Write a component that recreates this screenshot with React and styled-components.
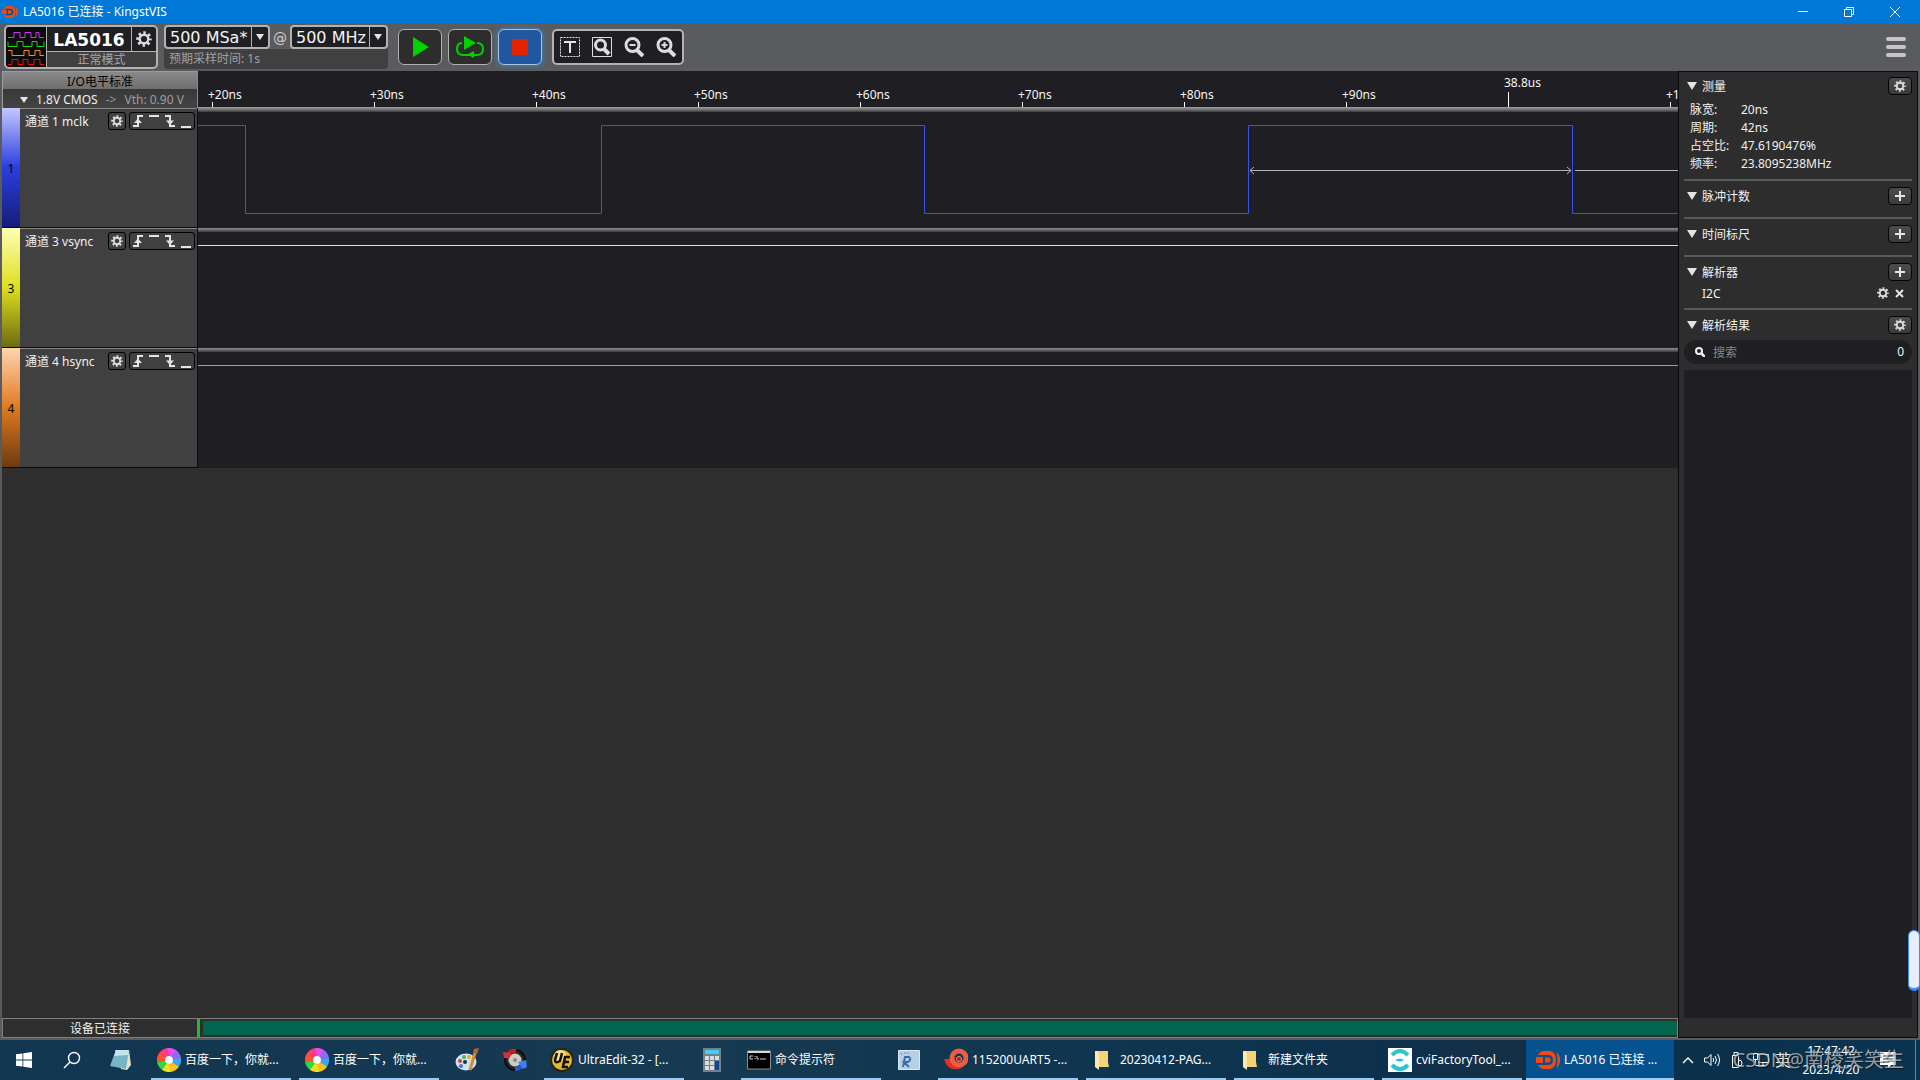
import React from "react";
import styled, { createGlobalStyle, css } from "styled-components";

const Global = createGlobalStyle`
  *, *::before, *::after { box-sizing: border-box; }
  body { margin: 0; background: #595b5f; }
  body, button, input, select {
    font-family: "Noto Sans", "Noto Sans CJK SC", sans-serif;
    font-size: 12px;
    line-height: 18px;
    color: #f0f0f0;
  }
  button { background: none; border: 0; padding: 0; margin: 0; }
  svg { display: block; flex: none; }
`;

const Screen = styled.div`
  min-height: 100vh;
  display: flex;
  flex-direction: column;
  background: #595b5f;
  position: relative;
  overflow: hidden;
`;

/* ---------- title bar ---------- */
const TitleBar = styled.header`
  height: 23px;
  background: #0078d7;
  display: flex;
  align-items: center;
  gap: 5px;
  padding: 0 2px;
`;
const WindowTitle = styled.div`
  flex: 1;
  color: #fff;
`;
const WindowButtons = styled.div`
  display: flex;
`;
const WindowButton = styled.button`
  width: 46px;
  height: 23px;
  display: grid;
  place-items: center;
`;

/* ---------- tool bar ---------- */
const Toolbar = styled.div`
  height: 48px;
  padding: 2px 14px 2px 4px;
  display: flex;
  align-items: center;
`;
const DeviceBox = styled.div`
  width: 154px;
  height: 44px;
  border: 2px solid #b2b2b2;
  border-radius: 5px;
  background: #b2b2b2;
  display: grid;
  grid-template-columns: 40px 1fr 24px;
  grid-template-rows: 1fr 15px;
  gap: 1px;
  overflow: hidden;
`;
const DeviceLogo = styled.div`
  grid-row: span 2;
  background: #0c0c0c;
  display: grid;
  place-items: center;
`;
const DeviceName = styled.div`
  background: #1f1e23;
  color: #fff;
  font: bold 17px/26px "DejaVu Sans", sans-serif;
  height: 24px;
  text-align: center;
`;
const DeviceGear = styled.button`
  background: #1f1e23;
  display: grid;
  place-items: center;
`;
const DeviceMode = styled.div`
  grid-column: span 2;
  background: #404040;
  color: #a6a6a6;
  line-height: 15px;
  text-align: center;
`;
const SampleBox = styled.div`
  margin-left: 6px;
  width: 224px;
  height: 44px;
  border-radius: 4px;
  background: #404040;
  display: flex;
  flex-direction: column;
`;
const SampleRow = styled.div`
  display: flex;
  justify-content: space-between;
  border-radius: 4px;
  background: #595b5f;
`;
const At = styled.span`
  font: 14px/26px "DejaVu Sans", sans-serif;
  height: 24px;
  color: #d0d0d0;
`;
const SampleNote = styled.div`
  padding: 1px 0 0 5px;
  color: #a0a0a0;
`;
const SelectFrame = styled.div`
  width: ${(p) => p.$w}px;
  height: 24px;
  border: 2px solid #b2b2b2;
  border-radius: 4px;
  background: #1f1e23;
  display: flex;
  align-items: stretch;
`;
const Select = styled.select`
  appearance: none;
  flex: 1;
  min-width: 0;
  border: 0;
  border-right: 1px solid #b2b2b2;
  padding: 1px 0 0 4px;
  background: transparent;
  color: #f4f4f4;
  font: 16px/20px "DejaVu Sans", sans-serif;
`;
const SelectArrow = styled.span`
  width: 16px;
  display: grid;
  place-items: center;
`;
const RunButtons = styled.div`
  display: flex;
  gap: 6px;
  margin-left: 10px;
`;
const RunButton = styled.button`
  width: 44px;
  height: 36px;
  border: 1px solid #b2b2b2;
  border-radius: 6px;
  background: #2d2d2d;
  display: grid;
  place-items: center;
  ${(p) =>
    p.$active &&
    css`
      background: #2158a0;
      border-color: #a9c4dc;
      box-shadow: 0 0 5px 1px #3d7fb0;
    `}
`;
const ZoomGroup = styled.div`
  margin-left: 10px;
  height: 36px;
  padding: 0 6px;
  border: 2px solid #b2b2b2;
  border-radius: 5px;
  background: #1f1e23;
  display: flex;
  align-items: center;
  gap: 12px;
`;
const MenuButton = styled.button`
  margin-left: auto;
`;

/* ---------- work area ---------- */
const Work = styled.div`
  flex: 1;
  display: grid;
  grid-template-columns: minmax(0, 1fr) 240px;
  padding: 0 2px 2px;
`;
const Capture = styled.main`
  display: flex;
  flex-direction: column;
  min-width: 0;
  background: #2e2e2e;
`;
const Line = styled.div`
  display: grid;
  grid-template-columns: 196px minmax(0, 1fr);
`;
const Standard = styled.div`
  height: 37px;
  border: 1px solid #9c9c9c;
  border-right-color: #8a8a8a;
  background: #404040;
  display: flex;
  flex-direction: column;
`;
const StandardTitle = styled.div`
  height: 17px;
  line-height: 20px;
  background: linear-gradient(#8a8a8a, #6e6e6e);
  color: #000;
  text-align: center;
`;
const StandardButton = styled.button`
  flex: 1;
  display: flex;
  align-items: center;
  padding: 2px 0 0 17px;
  background: linear-gradient(#383838, #444);
  gap: 8px;
  white-space: nowrap;
`;
const Dim = styled.span`
  color: #9c9c9c;
`;
const Ruler = styled.div`
  height: 37px;
  padding-left: 10px;
  background: #1f1e23;
  border-bottom: 1px solid #9a9a9a;
  display: flex;
  align-items: flex-end;
  overflow: hidden;
`;
const Tick = styled.div`
  flex: none;
  width: 162px;
  line-height: ${(p) => (p.$major ? 18 : 14)}px;
  color: #f4f4f4;
  &::after {
    content: "";
    display: block;
    width: 1px;
    height: ${(p) => (p.$major ? 15 : 5)}px;
    margin-left: 4px;
    background: #fff;
  }
`;
const Channel = styled.section`
  height: 120px;
  display: flex;
  border-right: 1px solid #0c0c0c;
  border-bottom: 1px solid #0c0c0c;
  background: #404040;
`;
const ChannelStrip = styled.div`
  width: 18px;
  padding-top: 1px;
  background: linear-gradient(${(p) => p.$stops});
  color: #000;
  text-align: center;
  line-height: 120px;
`;
const ChannelHead = styled.div`
  flex: 1;
  border-top: 1px solid #8a8a8a;
  padding: 3px 2px 0 5px;
  display: flex;
  align-items: flex-start;
  gap: 3px;
`;
const ChannelName = styled.div`
  flex: 1;
  padding-top: 1px;
  white-space: nowrap;
`;
const InsetButton = styled.button`
  width: 18px;
  height: 18px;
  border: 1px solid #000;
  border-radius: 3px;
  display: grid;
  place-items: center;
`;
const Triggers = styled.div`
  width: 66px;
  height: 18px;
  border: 1px solid #000;
  border-radius: 3px;
  padding: 0 3px;
  display: flex;
  align-items: center;
  gap: 6px;
`;
const Lane = styled.div`
  height: 120px;
  background: linear-gradient(#8c8c8c, #6a6a6a 2px, #3a3a3a 4px, #1f1e23 4px);
  overflow: hidden;
`;
const StatusLine = styled.footer`
  margin-top: auto;
  height: 20px;
  display: grid;
  grid-template-columns: 196px minmax(0, 1fr);
`;
const Status = styled.div`
  border: 1px solid #7e7e7e;
  text-align: center;
  line-height: 20px;
  height: 20px;
`;
const Progress = styled.div`
  border: 1px solid #7e7e7e;
  border-left: 0;
  padding: 2px 0;
  display: flex;
  gap: 3px;
  &::before {
    content: "";
    width: 2px;
    margin: -2px 0;
    background: #1fb83a;
  }
  &::after {
    content: "";
    flex: 1;
    background: #00664f;
  }
`;

/* ---------- side panel ---------- */
const Side = styled.aside`
  border: 1px solid #0a0a0a;
  background: #2d2d2d;
  padding: 0 5px 19px;
  display: flex;
  flex-direction: column;
`;
const Section = styled.section`
  padding: ${(p) => p.$pad};
  & + & {
    border-top: 2px solid #56595d;
  }
`;
const SectionHead = styled.div`
  height: 18px;
  padding-left: 3px;
  display: flex;
  align-items: center;
  gap: 5px;
`;
const SectionTitle = styled.div`
  flex: 1;
  padding-top: 2px;
`;
const RaisedButton = styled.button`
  width: 24px;
  height: 18px;
  border: 1px solid #050505;
  border-radius: 4px;
  background: linear-gradient(#4c4c4c, #3a3a3a);
  display: grid;
  place-items: center;
`;
const Readings = styled.dl`
  margin: 6px 0 0 6px;
  display: grid;
  grid-template-columns: 51px 1fr;
  dd { margin: 0; }
`;
const Analyzer = styled.div`
  height: 24px;
  padding: 0 8px 0 18px;
  display: flex;
  align-items: center;
  gap: 6px;
`;
const AnalyzerName = styled.div`
  flex: 1;
  padding-top: 1px;
`;
const Search = styled.label`
  margin-top: 6px;
  height: 24px;
  border-radius: 12px;
  background: #1f1e23;
  padding: 0 8px 0 11px;
  display: flex;
  align-items: center;
  gap: 8px;
`;
const SearchInput = styled.input`
  flex: 1;
  min-width: 0;
  border: 0;
  outline: 0;
  padding: 1px 0 0;
  background: transparent;
  &::placeholder { color: #868686; opacity: 1; }
`;
const Results = styled.div`
  flex: 1;
  margin-top: 6px;
  background: #1f1e23;
`;
const EdgeHandle = styled.div`
  position: absolute;
  right: 0;
  bottom: 89px;
  width: 12px;
  height: 61px;
  border: 1px solid #3f8cff;
  border-bottom-width: 3px;
  border-radius: 6px;
  background: #e6eeff;
`;

/* ---------- task bar ---------- */
const Taskbar = styled.nav`
  height: 40px;
  background: linear-gradient(90deg, #113651, #163a51 35%, #0e3450 60%, #0d314d 72%, #152f43 80%, #0a304b 88%, #0b3350);
  display: flex;
`;
const Launchers = styled.div`
  display: flex;
  padding-right: 3px;
`;
const Pinned = styled.button`
  width: 48px;
  display: grid;
  place-items: center;
`;
const Task = styled.button`
  width: 148px;
  padding-left: 10px;
  display: flex;
  align-items: center;
  gap: 4px;
  white-space: nowrap;
  color: #fff;
  background:
    linear-gradient(#9ccbf2, #9ccbf2) bottom center / ${(p) => (p.$active ? "100%" : "140px")} 2px no-repeat
    ${(p) => (p.$active ? "#05528f" : "transparent")};
  ${Pinned} + & {
    margin-left: 1px;
  }
`;
const Tray = styled.div`
  flex: 1;
  display: flex;
  align-items: center;
  justify-content: flex-end;
  position: relative;
  border-right: 1px solid #6b8496;
  margin-right: 4px;
  padding-right: 19px;
`;
const TrayIcons = styled.div`
  display: flex;
  align-items: center;
  gap: 10px;
  margin-right: 10px;
`;
const Ime = styled.span`
  font-size: 16px;
  line-height: 20px;
  margin-left: -4px;
`;
const Clock = styled.time`
  width: 60px;
  margin-right: 19px;
  text-align: center;
  line-height: 19px;
  color: #fff;
`;
const Watermark = styled.div`
  position: absolute;
  right: 11px;
  top: 6px;
  font-size: 20px;
  line-height: 28px;
  color: rgba(205, 205, 205, 0.72);
  text-shadow: 1px 1px 1px rgba(0, 0, 0, 0.5);
  white-space: nowrap;
  pointer-events: none;
`;

/* ---------- drawings ---------- */
const Gear = ({ size = 14 }) => (
  <svg width={size} height={size} viewBox="0 0 20 20" fill="none" stroke="#dcdcdc">
    <circle cx="10" cy="10" r="5.4" strokeWidth="3" />
    <circle cx="10" cy="10" r="8" strokeWidth="3.4" pathLength="16" strokeDasharray="1 1" strokeDashoffset="0.5" />
  </svg>
);
const Plus = () => (
  <svg width="12" height="12" stroke="#e4e4e4" strokeWidth="2">
    <path d="M6 1v10M1 6h10" />
  </svg>
);
const Down = ({ w = 8, h = 6 }) => (
  <svg width={w} height={h} viewBox="0 0 10 8" preserveAspectRatio="none">
    <path d="M0 0h10L5 8z" fill="#e4e4e4" />
  </svg>
);
const KingstLogo = ({ w = 16, h = 12, hole = "#0a5088" }) => (
  <svg width={w} height={h} viewBox="0 0 24 18">
    <path d="M8 0h6q6 1 6 9t-6 9H8Q4 18 2 14h9v-2H0V6h11V4H2Q4 0 8 0z" fill="#f04a12" />
    <path d="M6 4h6q5 0 5 5t-5 5H6v-2h1V6H6z" fill={hole} />
    <path d="M9 6.400h3q2.600 0 2.600 2.600T12 11.600H9z" fill="#f04a12" />
    <path d="M20.500 1q3.500 3 3.500 8t-3.500 8q2-8 0-16z" fill="#f04a12" />
  </svg>
);
const Waves = () => (
  <svg width="38" height="38" fill="none" strokeWidth="1">
    <path stroke="#c13cf0" d="M1 9.500h6v-5h6v5h5v-5h6v5h5v-5h3v5h5" />
    <path stroke="#10d810" d="M1 13.500v5h9v-5h6v5h9v-5h5v5h7v-5" />
    <path stroke="#ff8c10" d="M1 22.500h4v5h12v-5h5v5h6v-5h5v5h4" />
    <path stroke="#e01010" d="M1 36.500h4v-5h6v5h5v-5h5v5h6v-5h6v5h4" />
  </svg>
);
const PlayIcon = () => (
  <svg width="18" height="20"><path d="M2 0 18 10 2 20z" fill="#00d200" /></svg>
);
const LoopIcon = () => (
  <svg width="28" height="24">
    <path d="M8 1 20 8 8 15z" fill="#00d200" />
    <path d="M6 8Q1 8 1 14t6 6h14q6 0 6-6t-6-6" fill="none" stroke="#00d200" strokeWidth="2" />
    <path d="M18 16v7l-7-3.500z" fill="#00d200" />
  </svg>
);
const StopIcon = () => (
  <svg width="16" height="16"><path d="M0 0h16v16H0z" fill="#e22400" /></svg>
);
const TextZoomIcon = () => (
  <svg width="20" height="20" fill="none">
    <path d="M.5.5h19v19H.5z" stroke="#e4e4e4" strokeDasharray="2 1" />
    <path d="M4 5h12M10 5v11" stroke="#e4e4e4" strokeWidth="2" />
  </svg>
);
const Lens = ({ sign, frame }) => (
  <svg width="20" height="20" fill="none" stroke="#dcdcdc">
    {frame && <path d="M.5.5h19v19H.5z" />}
    <circle cx="8.500" cy="8" r={frame ? 5 : 6.5} strokeWidth="3" />
    <path d={frame ? "M12 12l5 5" : "M13 13l6 6"} strokeWidth="4" />
    {sign && <path d={sign} strokeWidth="2" />}
  </svg>
);
const TRIGGERS = {
  上升沿: "M0 12h5V2h5",
  高电平: "M0 2h10",
  下降沿: "M0 2h5v10h5",
  低电平: "M0 13h10",
};
const TriggerIcon = ({ kind }) => (
  <svg width="10" height="14" fill="none" stroke="#e4e4e4" strokeWidth="2">
    <path d={TRIGGERS[kind]} />
    {kind === "上升沿" && <path d="M5 4.500 9 9H1z" fill="#e4e4e4" stroke="none" />}
    {kind === "下降沿" && <path d="M5 11 1 6.500h8z" fill="#e4e4e4" stroke="none" />}
  </svg>
);
const Pinwheel = () => (
  <svg width="24" height="24" fill="none" strokeWidth="8">
    {["#e84cf0", "#8a6cf5", "#38a8f0", "#ffc020", "#f0e020", "#30d840", "#ff5030", "#ff3c78"].map((c, i) => (
      <path key={c} d="M12 4a8 8 0 0 1 6 2.500" stroke={c} transform={`rotate(${i * 45 - 10} 12 12)`} />
    ))}
    <circle cx="12" cy="12" r="4" fill="#fff" stroke="none" />
  </svg>
);
const Folder = () => (
  <svg width="24" height="24">
    <path d="M6 3h10v11l1 5H7z" fill="#f3d27a" />
    <path d="M3 3h3l1 2v17l-4-3z" fill="#ffe9a8" />
  </svg>
);
const UeIcon = () => (
  <svg width="24" height="24">
    <circle cx="12" cy="12" r="11" fill="#e3b938" stroke="#2a2410" strokeWidth="2" />
    <circle cx="10" cy="8" r="6" fill="#f5e08c" />
    <path d="M7 5 5 12q0 4 5 1l2-8M20 9h-5l-2 10h5M14 14h5" fill="none" stroke="#15130c" strokeWidth="2.600" />
  </svg>
);
const CmdIcon = () => (
  <svg width="24" height="24">
    <path d="M.5 3h23v18H.5z" fill="#000" stroke="#8c8c8c" />
    <path d="M1 3h22v2H1z" fill="#d8d8d8" />
    <path d="M6 8H3v3h3M8 8v1M8 10v1M10 8v3h2M13 11h6" stroke="#d0d0d0" fill="none" />
  </svg>
);
const SnailIcon = () => (
  <svg width="24" height="24" fill="none">
    <path d="M0 11h8q0 6 7 4l3 5q-14 5-18-9z" fill="#e0301e" />
    <circle cx="15" cy="10" r="7" stroke="#ee5a44" strokeWidth="5" />
    <circle cx="15" cy="11" r="2.500" fill="#b01818" stroke="#ff8c70" />
  </svg>
);
const CviIcon = () => (
  <svg width="24" height="24" fill="none" stroke="#2cc5cc" strokeWidth="4">
    <path d="M0 0h24v24H0z" fill="#fff" stroke="none" />
    <path d="M4 7q8-8 16 0M4 17q8 8 16 0" />
    <path d="M7 12q5-3 9 0-4 3-9 0z" fill="#2cc5cc" stroke="none" />
  </svg>
);
const NotepadIcon = () => (
  <svg width="24" height="24">
    <path d="M7 2h14l2 15-4 5-6-1z" fill="#e6e0d0" />
    <path d="M8 2h13l-3 19-16-3z" fill="#76b4c6" />
    <path d="M8 2h13l-1 5L6 8z" fill="#c6e2ea" />
  </svg>
);
const PaintIcon = () => (
  <svg width="24" height="24">
    <ellipse cx="11" cy="14" rx="10.500" ry="8.500" fill="#cfe2f2" />
    <circle cx="5" cy="13" r="2" fill="#d8402c" />
    <circle cx="9" cy="9" r="2" fill="#52b848" />
    <circle cx="14" cy="9" r="2" fill="#e8b020" />
    <circle cx="6" cy="18" r="2" fill="#4078d0" />
    <circle cx="10" cy="14" r="2" fill="#123650" />
    <path d="M20 5l-5 17" stroke="#d98a35" strokeWidth="3" />
    <path d="M18 5l1-4 5-1-2 6z" fill="#b06a30" />
  </svg>
);
const CleanerIcon = () => (
  <svg width="24" height="24" fill="none">
    <circle cx="12" cy="12" r="10" fill="#2c2c2c" stroke="#0c0c0c" strokeWidth="2" />
    <circle cx="12" cy="12" r="6.500" fill="#cfccc0" />
    <circle cx="12" cy="12" r="2" fill="#8c8a80" />
    <path d="M4 8q3-6 9-5" stroke="#d01820" strokeWidth="4" />
    <path d="M0 4l8 1-1 5H1z" fill="#d83038" />
    <path d="M21 15q-3 6-9 6" stroke="#2858d0" strokeWidth="4" />
    <path d="M15 14l8-2 1 7-4 2z" fill="#4080f0" />
  </svg>
);
const CalcIcon = () => (
  <svg width="18" height="24">
    <path d="M0 0h18v24H0z" fill="#76808a" />
    <path d="M2 2h14v4H2z" fill="#40d0f4" />
    <path d="M2 8h4v4H2zM7 8h4v4H7zM12 8h4v4h-4zM2 13h4v4H2zM7 13h4v4H7zM2 18h4v4H2zM7 18h4v4H7z" fill="#d6dce0" />
    <path d="M12 13h4v9h-4z" fill="#0c4a94" />
  </svg>
);
const RIcon = () => (
  <svg width="22" height="20" fill="none">
    <path d="M.5.5h21v19H.5z" fill="#b8d0e6" stroke="#dce8f4" />
    <path d="M5 17 7 7h4q3 2-1 5H6l5 5" stroke="#3a6ea8" strokeWidth="2" />
    <path d="M3 3l1 2M7 2v2M10 2v2" stroke="#6a8cb0" />
  </svg>
);
const WindowsIcon = () => (
  <svg width="16" height="16" fill="#fff">
    <path d="M0 2.300 6.500 1.400v6.200H0zM7.300 1.300 16 0v7.600H7.300zM0 8.400h6.500v6.200L0 13.700zM7.300 8.400H16V16l-8.700-1.300z" />
  </svg>
);
const FindIcon = () => (
  <svg width="18" height="18" fill="none" stroke="#fff" strokeWidth="1.400">
    <circle cx="11" cy="7" r="5.500" />
    <path d="M7 11l-6 6" />
  </svg>
);

const RULER = ["+20ns", "+30ns", "+40ns", "+50ns", "+60ns", "+70ns", "+80ns", "+90ns", "38.8us", "+10ns"];

const CHANNELS = [
  {
    id: 1,
    name: "通道 1 mclk",
    stops: "#c3c8ff, #2a3ee0 50%, #141d78",
    color: "#3c50f0",
    path: "M0 17.500H47.500V105.500H403.500V17.500H726.500V105.500H1050.500V17.500H1374.500V105.500H4000",
    measure: true,
  },
  { id: 3, name: "通道 3 vsync", stops: "#ffffb4, #dede20 50%, #6c6c10", color: "#f4f428", path: "M0 17.500H4000" },
  { id: 4, name: "通道 4 hsync", stops: "#ffd4b0, #e07a20 50%, #6c3a10", color: "#f08a38", path: "M0 17.500H4000" },
];

const READINGS = [
  ["脉宽:", "20ns"],
  ["周期:", "42ns"],
  ["占空比:", "47.6190476%"],
  ["频率:", "23.8095238MHz"],
];

const LAUNCHERS = [
  { icon: <WindowsIcon />, label: "开始" },
  { icon: <FindIcon />, label: "查找" },
  { icon: <NotepadIcon />, label: "记事本" },
];

const TASKS = [
  { icon: <Pinwheel />, label: "百度一下，你就..." },
  { icon: <Pinwheel />, label: "百度一下，你就..." },
  { icon: <PaintIcon />, label: "画图", pinned: true },
  { icon: <CleanerIcon />, label: "清理", pinned: true },
  { icon: <UeIcon />, label: "UltraEdit-32 - [..." },
  { icon: <CalcIcon />, label: "计算器", pinned: true },
  { icon: <CmdIcon />, label: "命令提示符" },
  { icon: <RIcon />, label: "R", pinned: true },
  { icon: <SnailIcon />, label: "115200UART5 -..." },
  { icon: <Folder />, label: "20230412-PAG..." },
  { icon: <Folder />, label: "新建文件夹" },
  { icon: <CviIcon />, label: "cviFactoryTool_..." },
  { icon: <KingstLogo w={24} h={18} />, label: "LA5016 已连接 ...", active: true },
];

function ValueSelect({ width, label, value }) {
  return (
    <SelectFrame $w={width}>
      <Select aria-label={label} defaultValue={value}>
        <option>{value}</option>
      </Select>
      <SelectArrow><Down w={8} h={6} /></SelectArrow>
    </SelectFrame>
  );
}

function PanelSection({ title, action, settings, pad, children }) {
  return (
    <Section $pad={pad}>
      <SectionHead>
        <Down w={10} h={8} />
        <SectionTitle>{title}</SectionTitle>
        <RaisedButton aria-label={action}>{settings ? <Gear size={12} /> : <Plus />}</RaisedButton>
      </SectionHead>
      {children}
    </Section>
  );
}

export default function App() {
  return (
    <Screen>
      <Global />
      <TitleBar>
        <KingstLogo />
        <WindowTitle>LA5016 已连接 - KingstVIS</WindowTitle>
        <WindowButtons>
          <WindowButton aria-label="最小化">
            <svg width="10" height="10"><path d="M0 4.500h10" stroke="#fff" /></svg>
          </WindowButton>
          <WindowButton aria-label="还原">
            <svg width="10" height="10" fill="none" stroke="#fff"><path d="M.5 2.500h7v7h-7zM2.500 2.500v-2h7v7h-2" /></svg>
          </WindowButton>
          <WindowButton aria-label="关闭">
            <svg width="10" height="10" stroke="#fff"><path d="M0 0l10 10M10 0 0 10" /></svg>
          </WindowButton>
        </WindowButtons>
      </TitleBar>

      <Toolbar>
        <DeviceBox>
          <DeviceLogo><Waves /></DeviceLogo>
          <DeviceName>LA5016</DeviceName>
          <DeviceGear aria-label="设备设置"><Gear size={16} /></DeviceGear>
          <DeviceMode>正常模式</DeviceMode>
        </DeviceBox>
        <SampleBox>
          <SampleRow>
            <ValueSelect width={106} label="采样深度" value="500 MSa*" />
            <At>@</At>
            <ValueSelect width={98} label="采样率" value="500 MHz" />
          </SampleRow>
          <SampleNote>预期采样时间: 1s</SampleNote>
        </SampleBox>
        <RunButtons>
          <RunButton aria-label="开始采样"><PlayIcon /></RunButton>
          <RunButton aria-label="循环采样"><LoopIcon /></RunButton>
          <RunButton aria-label="停止" $active><StopIcon /></RunButton>
        </RunButtons>
        <ZoomGroup>
          <button aria-label="触发位置"><TextZoomIcon /></button>
          <button aria-label="缩放全部"><Lens frame /></button>
          <button aria-label="缩小"><Lens sign="M5.500 8h6" /></button>
          <button aria-label="放大"><Lens sign="M5.500 8h6M8.500 5v6" /></button>
        </ZoomGroup>
        <MenuButton aria-label="菜单">
          <svg width="20" height="20" stroke="#c6c6c6" strokeWidth="4" strokeLinecap="round">
            <path d="M2 2h16M2 10h16M2 18h16" />
          </svg>
        </MenuButton>
      </Toolbar>

      <Work>
        <Capture>
          <Line>
            <Standard>
              <StandardTitle>I/O电平标准</StandardTitle>
              <StandardButton>
                <Down w={8} h={6} />
                <span>1.8V CMOS</span>
                <Dim>-&gt;</Dim>
                <Dim>Vth: 0.90 V</Dim>
              </StandardButton>
            </Standard>
            <Ruler>
              {RULER.map((t) => (
                <Tick key={t} $major={!t.startsWith("+")}>{t}</Tick>
              ))}
            </Ruler>
          </Line>
          {CHANNELS.map((c) => (
            <Line key={c.id}>
              <Channel>
                <ChannelStrip $stops={c.stops}>{c.id}</ChannelStrip>
                <ChannelHead>
                  <ChannelName>{c.name}</ChannelName>
                  <InsetButton aria-label={`${c.name} 设置`}><Gear size={12} /></InsetButton>
                  <Triggers>
                    {Object.keys(TRIGGERS).map((k) => (
                      <button key={k} aria-label={k}><TriggerIcon kind={k} /></button>
                    ))}
                  </Triggers>
                </ChannelHead>
              </Channel>
              <Lane>
                <svg width="100%" height="120" fill="none">
                  <path d={c.path} stroke={c.color} />
                  {c.measure && (
                    <path
                      d="M1052 62.500H1373M1056 59l-4 3.500 4 3.500M1369 59l4 3.500-4 3.500M1377 62.500H4000"
                      stroke="#b4b4b4"
                    />
                  )}
                </svg>
              </Lane>
            </Line>
          ))}
          <StatusLine>
            <Status>设备已连接</Status>
            <Progress />
          </StatusLine>
        </Capture>

        <Side>
          <PanelSection title="测量" action="测量设置" settings pad="5px 0 6px">
            <Readings>
              {READINGS.map(([k, v]) => (
                <React.Fragment key={k}>
                  <dt>{k}</dt>
                  <dd>{v}</dd>
                </React.Fragment>
              ))}
            </Readings>
          </PanelSection>
          <PanelSection title="脉冲计数" action="添加脉冲计数" pad="6px 0 12px" />
          <PanelSection title="时间标尺" action="添加时间标尺" pad="6px 0 12px" />
          <PanelSection title="解析器" action="添加解析器" pad="6px 0 3px">
            <Analyzer>
              <AnalyzerName>I2C</AnalyzerName>
              <button aria-label="I2C 设置"><Gear size={12} /></button>
              <button aria-label="移除 I2C">
                <svg width="9" height="9" stroke="#e4e4e4" strokeWidth="2"><path d="M1 1l7 7M8 1 1 8" /></svg>
              </button>
            </Analyzer>
          </PanelSection>
          <PanelSection title="解析结果" action="结果设置" settings pad="6px 0 0">
            <Search>
              <svg width="10" height="10" fill="none" stroke="#f0f0f0">
                <circle cx="4" cy="4" r="3" strokeWidth="2" />
                <path d="M6 6l4 4" strokeWidth="2.500" />
              </svg>
              <SearchInput placeholder="搜索" aria-label="搜索" />
              <span>0</span>
            </Search>
          </PanelSection>
          <Results />
        </Side>
      </Work>
      <EdgeHandle />

      <Taskbar>
        <Launchers>
          {LAUNCHERS.map((t) => (
            <Pinned key={t.label} aria-label={t.label}>{t.icon}</Pinned>
          ))}
        </Launchers>
        {TASKS.map((t, i) =>
          t.pinned ? (
            <Pinned key={i} aria-label={t.label}>{t.icon}</Pinned>
          ) : (
            <Task key={i} $active={t.active}>
              {t.icon}
              {t.label}
            </Task>
          )
        )}
        <Tray>
          <TrayIcons>
            <svg width="12" height="7" fill="none" stroke="#fff" strokeWidth="1.400"><path d="M1 6l5-5 5 5" /></svg>
            <svg width="17" height="14" fill="none" stroke="#fff">
              <path d="M.5 5h3L7 1.500v11L3.500 9h-3zM9 5q1.500 2 0 4M11 3q3 4 0 8M13.500 1q4 6 0 12" />
            </svg>
            <svg width="12" height="16" fill="none" stroke="#fff"><path d="M1.500 3.500h6v12h-6zM3 3V.5h4V3M8 8q3 0 3 3t-3 3" /></svg>
            <svg width="16" height="14" fill="none" stroke="#fff"><path d="M5 1.500h10.500v8H5M.5.5h4v6h-4zM2.500 7v5.500H12M10 10v3" /></svg>
            <Ime>英</Ime>
          </TrayIcons>
          <Clock>17:47:42<br />2023/4/20</Clock>
          <svg width="16" height="16">
            <path d="M0 0h16v13h-5l-3 3v-3H0z" fill="#fff" />
            <path d="M3 4h10M3 7h10M3 10h6" stroke="#0b304b" />
          </svg>
          <Watermark>CSDN@南棱笑笑生</Watermark>
        </Tray>
      </Taskbar>
    </Screen>
  );
}
